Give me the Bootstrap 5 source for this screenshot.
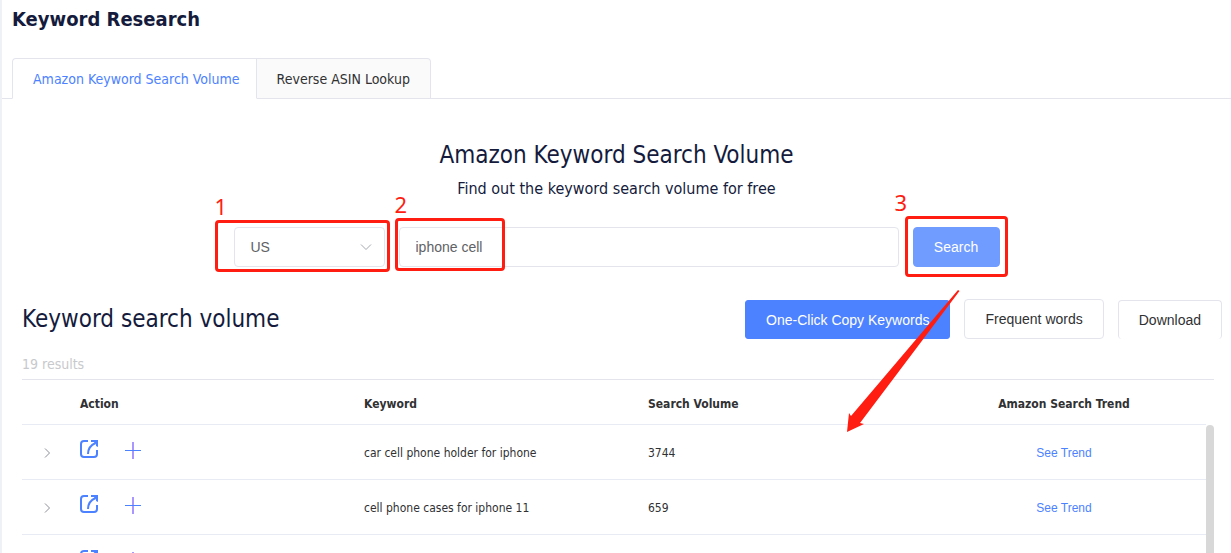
<!DOCTYPE html>
<html lang="en">
<head>
<meta charset="utf-8">
<meta name="viewport" content="width=device-width, initial-scale=1">
<title>Keyword Research</title>
<link href="https://cdn.jsdelivr.net/npm/bootstrap@5.3.0/dist/css/bootstrap.min.css" rel="stylesheet">
<style>
:root { --brand: #4c82ff; --ink: #141b3c; --line: #e4e5ec; --rule: #e9ebf4; --note: #ff1d11; }
body { font-family: "DejaVu Sans Condensed", "DejaVu Sans", sans-serif; font-size: 14px; line-height: 20px; color: #303133; border-left: 2px solid #eef2f7; }
h1 { font-size: 20px; line-height: 38px; color: var(--ink); padding-left: 10px; }
h2 { font-size: 24px; line-height: 36px; color: var(--ink); }
.tool-tabs { --bs-nav-tabs-border-color: var(--line); --bs-nav-tabs-border-radius: 4px; padding-left: 10px; }
.tool-tabs .nav-link { padding: 10px 20px 9px; line-height: 20px; color: #303133; background: #fafafa; border-color: var(--line); }
.tool-tabs .nav-link.active { padding-right: 16px; color: var(--brand); background: #fff; border-color: var(--line) var(--line) #fff; border-radius: 4px 0 0 0; }
.tool-tabs .nav-item + .nav-item .nav-link { border-left: 0; border-radius: 0 4px 0 0; }
.intro { padding-top: 38px; }
.intro p { font-size: 16px; line-height: 24px; color: var(--ink); margin: 4px 0 26px; }
.search-bar { gap: 14px; }
.ctl { font-family: "Liberation Sans", sans-serif; font-size: 14px; line-height: 20px; height: 40px; border-radius: 4px; border: 1px solid var(--line); color: #606266; padding: 9px 16px; }
.country { width: 151px; }
.phrase { width: 500px; }
.country .ctl { background-size: 16px 16px; background-position: right 10px center; background-image: url("data:image/svg+xml,%3Csvg xmlns='http://www.w3.org/2000/svg' viewBox='0 0 16 16'%3E%3Cpath d='M3 5.500l5 5 5-5' fill='none' stroke='%23a4a8b0'/%3E%3C/svg%3E"); }
button.ctl { padding: 9px 20px; color: #303133; background: #fff; }
button.ctl.go { width: 87px; color: #fff; background: #709bff; border-color: #709bff; }
button.ctl.copy { color: #fff; background: var(--brand); border-color: var(--brand); height: 39px; border-radius: 3px; }
button.ctl.save { height: 39px; border-bottom: 0; border-radius: 4px; }
.note { position: absolute; border: 3px solid var(--note); border-radius: 4px; pointer-events: none; }
.note span { position: absolute; bottom: 100%; left: -3px; font-family: "Noto Sans", sans-serif; font-size: 22px; line-height: 34px; color: var(--note); }
.note-country { inset: -7px -5px -5px -19px; }
.note-phrase { top: -9px; left: -4px; width: 110px; bottom: -4px; }
.note-go { inset: -11px -8px -10px -8px; }
.note-go span { left: -13px; }
.arrow { position: absolute; left: 102px; top: -11px; pointer-events: none; z-index: 2; }
.results { padding-left: 20px; }
.results-head { padding: 32px 9px 0 0; }
.results-head .btns { gap: 14px; }
.count { color: #c8c9cc; line-height: 20px; margin: 15px 0 5px; }
.list { margin-right: 17px; border-top: 1px solid var(--line); }
.list table { table-layout: fixed; font-size: 12px; line-height: 18px; color: #303133; margin: 0; --bs-table-bg: #fff; --bs-table-color: #303133; }
.list th, .list td { padding: 4px 10px 0; height: 44px; border-bottom: 1px solid var(--rule); vertical-align: middle; }
.list td { padding-top: 2px; height: 55px; }
.col-toggle { width: 48px; }
.list a { font-family: "Liberation Sans", sans-serif; color: var(--brand); }
.icon-btn { border: 0; background: none; padding: 0; display: block; color: var(--brand); }
.tools { gap: 24px; padding-bottom: 8px; }
.thumb { flex: 0 0 8px; margin-top: 45px; border-radius: 4px 4px 0 0; background: #d8d8d8; }
</style>
</head>
<body>
<svg class="d-none" xmlns="http://www.w3.org/2000/svg">
  <symbol id="chevron" viewBox="0 0 12 12"><path d="M5 1.500l4.500 4.500-4.500 4.500" fill="none" stroke="#8d8f99"/></symbol>
  <symbol id="open" viewBox="0 0 20 20">
    <path d="M8 2H4a3 3 0 0 0-3 3v10a3 3 0 0 0 3 3h10a3 3 0 0 0 3-3v-4" fill="none" stroke="currentColor" stroke-width="2"/>
    <path d="M8 15c0-6 3-9 7.500-11" fill="none" stroke="currentColor" stroke-width="2"/>
    <path d="M11 1h7v7l-2-1V5.500L14 3h-3z" fill="currentColor"/>
  </symbol>
  <symbol id="plus" viewBox="0 0 20 20"><path d="M9 3v17" fill="none" stroke="#a996ff" stroke-width="2"/><path d="M1 11.500h16" stroke="#4c82ff"/></symbol>
</svg>
<div class="vh-100 d-flex flex-column overflow-hidden">
  <header>
    <h1 class="fw-bold mb-0">Keyword Research</h1>
    <ul class="nav nav-tabs tool-tabs mt-3 pt-1">
      <li class="nav-item"><a class="nav-link active" aria-current="page" href="#">Amazon Keyword Search Volume</a></li>
      <li class="nav-item"><a class="nav-link" href="#">Reverse ASIN Lookup</a></li>
    </ul>
  </header>
  <section class="intro text-center">
    <h2 class="fw-normal mb-0">Amazon Keyword Search Volume</h2>
    <p>Find out the keyword search volume for free</p>
    <form class="search-bar d-flex justify-content-center text-start">
      <div class="country position-relative">
        <select class="form-select ctl" aria-label="Country"><option>US</option></select>
        <div class="note note-country"><span>1</span></div>
      </div>
      <div class="phrase position-relative">
        <input class="form-control ctl" type="text" value="iphone cell" aria-label="Keyword">
        <div class="note note-phrase"><span>2</span></div>
      </div>
      <div class="position-relative">
        <button class="btn ctl go" type="button">Search</button>
        <div class="note note-go"><span>3</span></div>
      </div>
    </form>
  </section>
  <section class="results flex-grow-1 d-flex flex-column overflow-hidden">
    <div class="results-head d-flex justify-content-between align-items-center">
      <h2 class="fw-normal mb-0">Keyword search volume</h2>
      <div class="btns d-flex align-items-end">
        <div class="position-relative d-flex">
          <button class="btn ctl copy" type="button">One-Click Copy Keywords</button>
          <svg class="arrow" width="114" height="144" viewBox="0 0 114 144"><path d="M111 1L112.500 2 13 134 17 135 0 143 2 124 4 127z" fill="#ff1d11"/></svg>
        </div>
        <button class="btn ctl" type="button">Frequent words</button>
        <button class="btn ctl save" type="button">Download</button>
      </div>
    </div>
    <p class="count">19 results</p>
    <div class="list d-flex">
      <table class="table">
        <thead>
          <tr><th class="col-toggle"></th><th>Action</th><th>Keyword</th><th>Search Volume</th><th class="text-center">Amazon Search Trend</th></tr>
        </thead>
        <tbody>
          <tr>
            <td><button class="icon-btn ms-2" aria-label="Expand"><svg width="12" height="12"><use href="#chevron"/></svg></button></td>
            <td><div class="tools d-flex"><button class="icon-btn" aria-label="Open"><svg width="20" height="20"><use href="#open"/></svg></button><button class="icon-btn" aria-label="Add"><svg width="20" height="20"><use href="#plus"/></svg></button></div></td>
            <td>car cell phone holder for iphone</td><td>3744</td>
            <td class="text-center"><a class="text-decoration-none" href="#">See Trend</a></td>
          </tr>
          <tr>
            <td><button class="icon-btn ms-2" aria-label="Expand"><svg width="12" height="12"><use href="#chevron"/></svg></button></td>
            <td><div class="tools d-flex"><button class="icon-btn" aria-label="Open"><svg width="20" height="20"><use href="#open"/></svg></button><button class="icon-btn" aria-label="Add"><svg width="20" height="20"><use href="#plus"/></svg></button></div></td>
            <td>cell phone cases for iphone 11</td><td>659</td>
            <td class="text-center"><a class="text-decoration-none" href="#">See Trend</a></td>
          </tr>
          <tr>
            <td></td>
            <td><div class="tools d-flex"><button class="icon-btn" aria-label="Open"><svg width="20" height="20"><use href="#open"/></svg></button><button class="icon-btn" aria-label="Add"><svg width="20" height="20"><use href="#plus"/></svg></button></div></td>
            <td></td><td></td><td></td>
          </tr>
        </tbody>
      </table>
      <div class="thumb"></div>
    </div>
  </section>
</div>
<script src="https://cdn.jsdelivr.net/npm/bootstrap@5.3.0/dist/js/bootstrap.bundle.min.js"></script>
</body>
</html>
